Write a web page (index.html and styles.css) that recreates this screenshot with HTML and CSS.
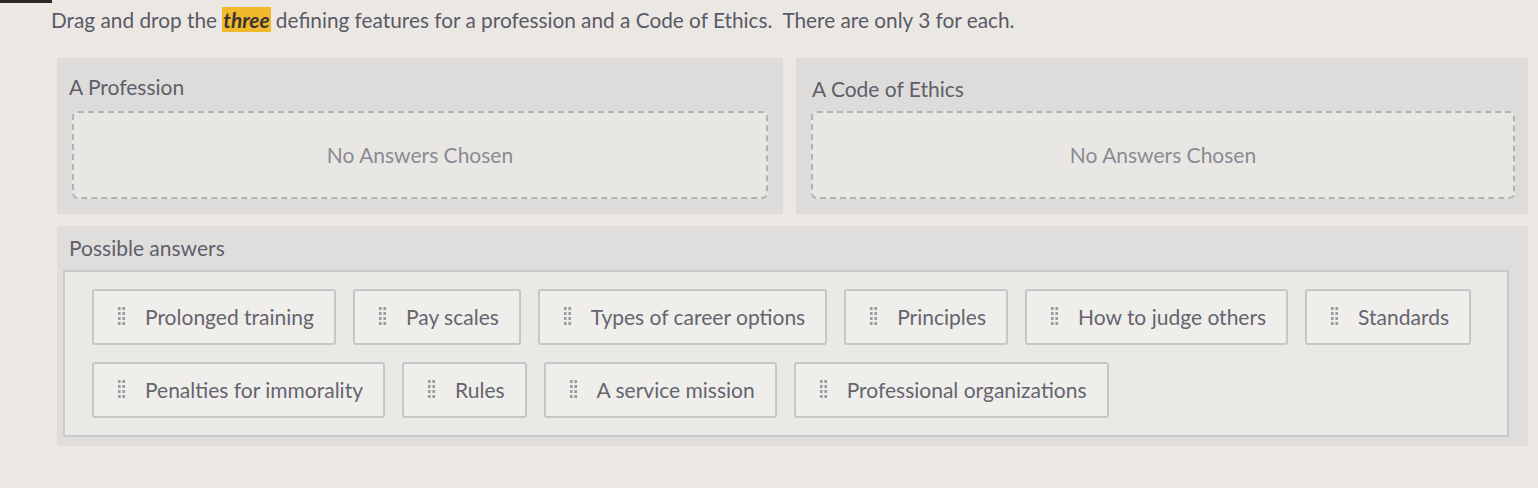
FILE: index.html
```html
<!DOCTYPE html>
<html>
<head>
  <meta charset="utf-8">
  <link rel="stylesheet" href="styles.css">
</head>
<body>
  <div class="corner"></div>
  <p class="prompt">Drag and drop the <mark>three</mark> defining features for a profession and a Code of Ethics.&nbsp; There are only 3 for each.</p>

  <div class="zones">
    <div class="zone">
      <div class="zone-title">A Profession</div>
      <div class="drop">No Answers Chosen</div>
    </div>
    <div class="zone zone-right">
      <div class="zone-title">A Code of Ethics</div>
      <div class="drop">No Answers Chosen</div>
    </div>
  </div>

  <div class="answers">
    <div class="answers-title">Possible answers</div>
    <div class="pool">
      <div class="chip"><span class="grip"></span>Prolonged training</div>
      <div class="chip"><span class="grip"></span>Pay scales</div>
      <div class="chip"><span class="grip"></span>Types of career options</div>
      <div class="chip"><span class="grip"></span>Principles</div>
      <div class="chip"><span class="grip"></span>How to judge others</div>
      <div class="chip"><span class="grip"></span>Standards</div>
      <div class="chip"><span class="grip"></span>Penalties for immorality</div>
      <div class="chip"><span class="grip"></span>Rules</div>
      <div class="chip"><span class="grip"></span>A service mission</div>
      <div class="chip"><span class="grip"></span>Professional organizations</div>
    </div>
  </div>
</body>
</html>
```

FILE: styles.css
```css
body {
  margin: 0;
  background-color: #ebe8e4;
  font-family: Lato, "Open Sans", sans-serif;
  color: #5f5e6b;
}

.corner {
  position: absolute;
  top: 0;
  left: 0;
  width: 52px;
  height: 3px;
  background-color: #2a2a2a;
}

.prompt {
  margin: 0;
  padding: 7px 0 0 51px;
  height: 49px;
  font-size: 20.8px;
  line-height: 26px;
  color: #5a5967;
}

.prompt mark {
  background-color: #f1b92c;
  color: #3a3530;
  font-weight: bold;
  font-style: italic;
  padding: 0 1px;
}

.zones {
  display: grid;
  grid-template-columns: 726fr 732fr;
  gap: 13px;
  margin: 2px 10px 0 57px;
}

.zone {
  background-color: #dddcda;
  padding: 16px 15px 15px 15px;
}

.zone-right {
  padding-right: 13px;
}

.zone-title {
  font-size: 21px;
  line-height: 26px;
  color: #5f5e6b;
  margin-bottom: 11px;
  margin-left: -3px;
}

.zone-right .zone-title {
  margin-top: 2px;
  margin-bottom: 9px;
  margin-left: 1px;
}

.drop {
  height: 84px;
  border: 2px dashed #b3b2b4;
  border-radius: 6px;
  background-color: #e9e7e4;
  display: flex;
  align-items: center;
  justify-content: center;
  font-size: 21px;
  color: #8b8a93;
  padding-bottom: 2px;
  box-sizing: border-box;
  height: 88px;
}

.answers {
  margin: 12px 10px 0 57px;
  background-color: #dfdedc;
  padding: 9px 19px 9px 6px;
}

.answers-title {
  font-size: 21px;
  line-height: 26px;
  padding-left: 6px;
  margin-bottom: 9px;
  color: #5f5e6b;
}

.pool {
  border: 2px solid #c9c8ca;
  background-color: #ebe9e6;
  padding: 17px 20px 17px 27px;
  display: flex;
  flex-wrap: wrap;
  gap: 17px;
}

.chip {
  height: 52px;
  display: flex;
  align-items: center;
  padding: 0 20px 2px 23px;
  box-sizing: content-box;
  height: 50px;
  border: 2px solid #c6c5c8;
  border-radius: 3px;
  background-color: #efeeeb;
  font-size: 21px;
  color: #65646f;
}

.grip {
  width: 9px;
  height: 20px;
  margin-right: 19px;
  background-image: radial-gradient(circle, #9c9ba2 1.4px, transparent 1.7px);
  background-size: 4.5px 5px;
}
```
